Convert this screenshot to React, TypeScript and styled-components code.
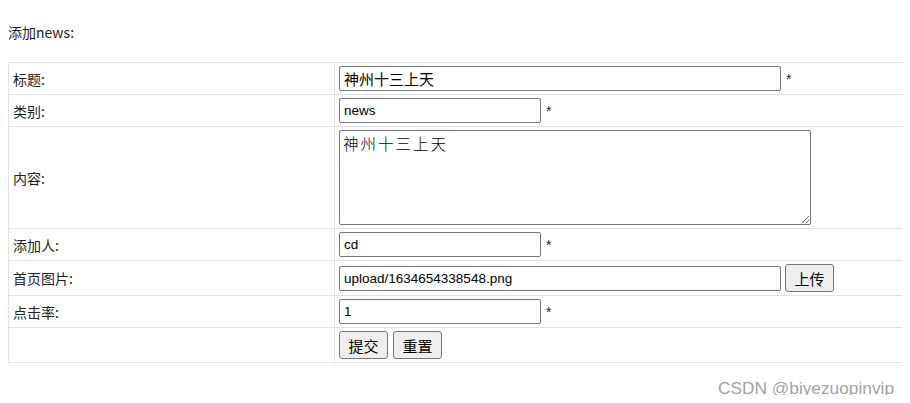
import React from "react";
import styled, { createGlobalStyle } from "styled-components";

const GlobalStyle = createGlobalStyle`
  html { overflow: hidden; }
  body {
    margin: 8px;
    background: #ffffff;
    color: #222222;
    font-family: "Noto Sans CJK SC", "Noto Sans", sans-serif;
    font-size: 13px;
  }
`;

const Page = styled.div`
  position: relative;
  box-sizing: border-box;
  height: 387px;
  padding-top: 14px;
`;

const Heading = styled.div`
  margin: 0 0 20px;
  height: 20px;
  line-height: 20px;
  font-size: 14px;
  color: #222;
`;

const FormTable = styled.table`
  border-collapse: collapse;
  table-layout: fixed;
  width: calc(100% + 9px);
  td {
    border: 1px solid #e0e0e6;
    padding: 3px 4px;
    vertical-align: middle;
  }
`;

const LabelCell = styled.td`
  width: 317px;
  font-size: 14px;
  color: #222;
`;

const FieldCell = styled.td``;

const FieldLine = styled.div`
  display: flex;
  align-items: center;
  gap: 4px;
`;

const TextInput = styled.input<{ $long?: boolean; $cjk?: boolean }>`
  box-sizing: border-box;
  width: ${(p) => (p.$long ? "442px" : "202px")};
  height: 25px;
  margin: 0;
  padding: 0 4px;
  border: 1px solid #767676;
  border-radius: 2px;
  background: #fff;
  color: #000;
  font-family: "Liberation Sans", "Noto Sans CJK SC", sans-serif;
  font-size: ${(p) => (p.$cjk ? "15px" : "13.5px")};
  font-weight: 400;
  outline: none;
`;

const Required = styled.span`
  font-family: "Liberation Sans", sans-serif;
  font-size: 14px;
  color: #222;
  padding-left: 1px;
`;

const Area = styled.textarea`
  display: block;
  box-sizing: border-box;
  width: 472px;
  height: 95px;
  margin: 0;
  padding: 2px 3px;
  border: 1px solid #767676;
  border-radius: 2px;
  resize: both;
  color: #000;
  font-family: "Noto Sans CJK SC", monospace;
  font-size: 15.5px;
  letter-spacing: 2px;
  line-height: 21px;
  font-weight: 300;
`;

const Btn = styled.button`
  box-sizing: border-box;
  height: 28px;
  min-width: 49px;
  margin: 0;
  padding: 0 8px;
  border: 1px solid #767676;
  border-radius: 3px;
  background: #efefef;
  color: #000;
  font-family: "Noto Sans CJK SC", sans-serif;
  font-size: 15px;
  line-height: 1;
`;

const BtnGroup = styled.div`
  display: flex;
  gap: 5px;
`;

const Watermark = styled.div`
  position: absolute;
  right: 8px;
  top: 370px;
  line-height: 20px;
  white-space: nowrap;
  font-family: "Liberation Sans", sans-serif;
  font-size: 17.3px;
  color: #a3a3a3;
`;

export default function App() {
  return (
    <>
      <GlobalStyle />
      <Page>
        <Heading>添加news:</Heading>
        <FormTable>
          <tbody>
            <tr>
              <LabelCell>标题:</LabelCell>
              <FieldCell>
                <FieldLine>
                  <TextInput $long $cjk defaultValue="神州十三上天" />
                  <Required>*</Required>
                </FieldLine>
              </FieldCell>
            </tr>
            <tr>
              <LabelCell>类别:</LabelCell>
              <FieldCell>
                <FieldLine>
                  <TextInput defaultValue="news" />
                  <Required>*</Required>
                </FieldLine>
              </FieldCell>
            </tr>
            <tr>
              <LabelCell>内容:</LabelCell>
              <FieldCell>
                <Area defaultValue="神州十三上天" />
              </FieldCell>
            </tr>
            <tr>
              <LabelCell>添加人:</LabelCell>
              <FieldCell>
                <FieldLine>
                  <TextInput defaultValue="cd" />
                  <Required>*</Required>
                </FieldLine>
              </FieldCell>
            </tr>
            <tr>
              <LabelCell>首页图片:</LabelCell>
              <FieldCell>
                <FieldLine>
                  <TextInput $long defaultValue="upload/1634654338548.png" />
                  <Btn type="button">上传</Btn>
                </FieldLine>
              </FieldCell>
            </tr>
            <tr>
              <LabelCell>点击率:</LabelCell>
              <FieldCell>
                <FieldLine>
                  <TextInput defaultValue="1" />
                  <Required>*</Required>
                </FieldLine>
              </FieldCell>
            </tr>
            <tr>
              <LabelCell />
              <FieldCell>
                <BtnGroup>
                  <Btn type="submit">提交</Btn>
                  <Btn type="reset">重置</Btn>
                </BtnGroup>
              </FieldCell>
            </tr>
          </tbody>
        </FormTable>
        <Watermark>CSDN @biyezuopinvip</Watermark>
      </Page>
    </>
  );
}
